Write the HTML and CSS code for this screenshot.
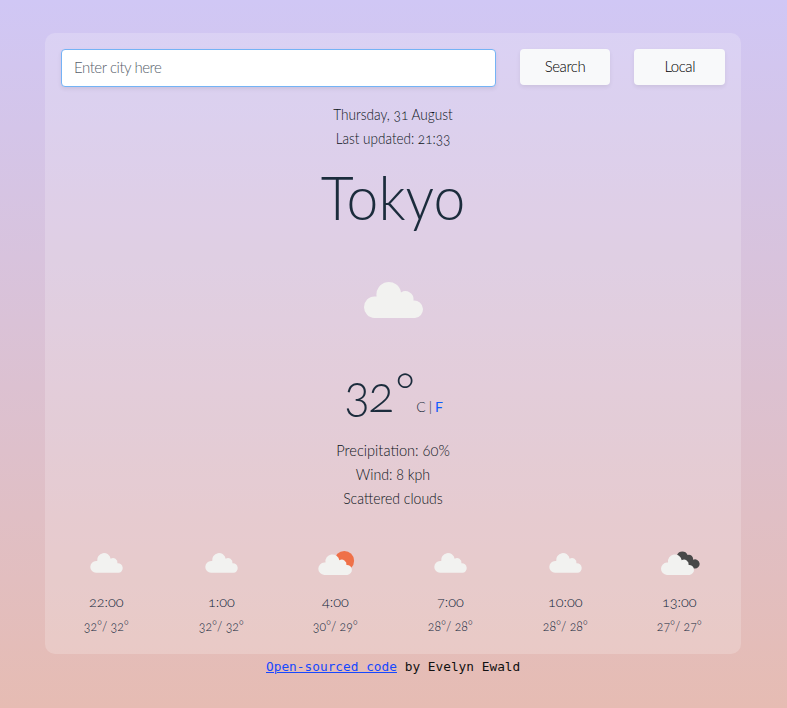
FILE: index.html
```html
<!DOCTYPE html>
<html lang="en">
<head>
<meta charset="utf-8">
<title>Weather</title>
<link rel="stylesheet" href="styles.css">
</head>
<body>
<svg class="defs" aria-hidden="true">
  <defs>
    <path id="cloud" d="M10.5 37A10.5 10.8 0 0 1 10.5 15.4H12.6A12.3 12.3 0 1 1 37 11.4A8.2 8.2 0 0 1 49.4 19.6A8.7 8.7 0 0 1 51 37Z"/>
  </defs>
</svg>
<main class="card">
  <form class="search">
    <input class="city-input" type="text" placeholder="Enter city here">
    <button class="btn" type="button">Search</button>
    <button class="btn" type="button">Local</button>
  </form>
  <div class="dates">
    <div class="w-date">Thursday, 31 August</div>
    <div class="w-updated">Last updated: 21:33</div>
  </div>
  <h1 class="city">Tokyo</h1>
  <svg class="main-icon" viewBox="0 0 59 37"><use href="#cloud" fill="#f2f2f0"/></svg>
  <div class="temperature"><span class="temp">32</span><span class="degree">°</span><span class="units">C <span class="bar">|</span> <a href="#">F</a></span></div>
  <div class="details">
    <div class="w-rain">Precipitation: 60%</div>
    <div class="w-wind">Wind: 8 kph</div>
    <div class="w-sky">Scattered clouds</div>
  </div>
  <section class="forecast">
    <div class="hour"><svg viewBox="0 0 40 26"><use href="#cloud" fill="#f2f2f0" transform="translate(4.3 2.5) scale(.55)"/></svg><div class="time">22:00</div><div class="range">32°/ 32°</div></div>
    <div class="hour"><svg viewBox="0 0 40 26"><use href="#cloud" fill="#f2f2f0" transform="translate(4.3 2.5) scale(.55)"/></svg><div class="time">1:00</div><div class="range">32°/ 32°</div></div>
    <div class="hour"><svg viewBox="0 0 40 26"><circle cx="28.3" cy="10.8" r="9.8" fill="#ef7048"/><use href="#cloud" fill="#f2f2f0" transform="translate(2.3 3.8) scale(.57)"/></svg><div class="time">4:00</div><div class="range">30°/ 29°</div></div>
    <div class="hour"><svg viewBox="0 0 40 26"><use href="#cloud" fill="#f2f2f0" transform="translate(4.3 2.5) scale(.55)"/></svg><div class="time">7:00</div><div class="range">28°/ 28°</div></div>
    <div class="hour"><svg viewBox="0 0 40 26"><use href="#cloud" fill="#f2f2f0" transform="translate(4.3 2.5) scale(.55)"/></svg><div class="time">10:00</div><div class="range">28°/ 28°</div></div>
    <div class="hour"><svg viewBox="0 0 40 26"><path fill="#484848" d="M17 5A5.8 5.8 0 0 1 27.6 5A4.2 4.2 0 0 1 33 9.8A4.6 4.6 0 1 1 34 18.4L25 16Z"/><use href="#cloud" fill="#f2f2f0" transform="translate(1 3.8) scale(.56 .57)"/></svg><div class="time">13:00</div><div class="range">27°/ 27°</div></div>
  </section>
</main>
<footer><a href="#">Open-sourced code</a> by Evelyn Ewald</footer>
</body>
</html>
```
FILE: styles.css
```css
* { box-sizing: border-box; }
body {
  margin: 0;
  height: 708px;
  padding-top: 33px;
  background: linear-gradient(#d0c7f5, #e6bcb3);
  font-family: Lato, "Open Sans", sans-serif;
  font-weight: 300;
  font-size: 15px;
  line-height: 24px;
  font-variant-numeric: oldstyle-nums;
  color: #0c1420;
  overflow: hidden;
}
.defs { position: absolute; width: 0; height: 0; }
.card {
  width: 696px;
  height: 621px;
  margin: 0 auto 0 45px;
  padding: 16px;
  border-radius: 10px;
  background: rgba(255, 255, 255, .2);
  text-align: center;
}
.search { display: grid; grid-template-columns: 434.7px 90.7px 90.7px; column-gap: 24px; align-items: start; height: 38px; }
.city-input, .btn {
  font: inherit;
  letter-spacing: -.45px;
  border-radius: 4px;
  box-shadow: 0 2px 4px rgba(0, 0, 0, .075);
}
.city-input { width: 100%; height: 38px; padding: 0 12px 2px; border: 1px solid #74b3f5; background: #fff; }
.city-input::placeholder { color: #56606a; opacity: 1; }
.btn { height: 36px; padding: 0 0 2px; border: 0; background: #f8f9fa; color: #000; }
.dates { margin-top: 15px; }
.w-date { transform: scaleX(.91); }
.w-updated { transform: scaleX(.9); }
.city { margin: 7px 0 0; font-size: 61px; line-height: 80px; font-weight: 300; color: #1b2c3c; transform: scaleX(.935); }
.main-icon { display: block; width: 59px; height: 37px; margin: 44px auto 0; }
.temperature { display: flex; justify-content: center; align-items: flex-start; height: 60px; margin-top: 44px; color: #1b2c3c; }
.temp { font-size: 51px; line-height: 62px; letter-spacing: -1.8px; transform: scaleX(.94); transform-origin: right; }
.degree { font-size: 49px; line-height: 58px; margin: -1px 0 0 2px; }
.units { font-size: 14px; margin: 33px 2px 0 1px; letter-spacing: -.4px; }
.units .bar { color: #1b2c3c; }
.units a { color: #0d5bff; font-weight: 400; text-decoration: none; }
.details { margin-top: 16px; }
.w-rain { transform: scaleX(.975); }
.w-wind { transform: scaleX(.945); }
.w-sky { transform: scaleX(.935); }
.forecast { display: grid; grid-template-columns: repeat(6, 1fr); margin: 40px -12px 0; font-size: 14px; color: #0c1c38; }
.hour svg { display: block; width: 40px; height: 26px; margin: 0 auto 14px; }
.time { transform: scaleX(1.03); }
.range { transform: scaleX(.87); }
footer { margin-left: 266px; font: 12.8px/26px "DejaVu Sans Mono", monospace; color: #111; white-space: nowrap; }
footer a { color: #1648ff; }
```
